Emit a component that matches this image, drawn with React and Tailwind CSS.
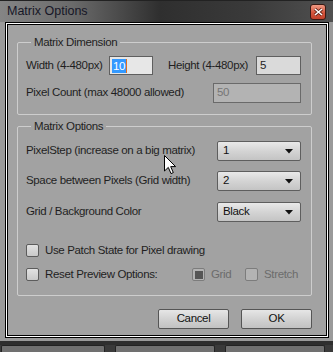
import React from 'react'

const font = { fontFamily: '"Liberation Sans", Arial, sans-serif' }

function Select({ value }) {
  return (
    <div className="flex h-[20px] w-[84px] items-center justify-between rounded-[2px] border border-[#5e5e5e] bg-[linear-gradient(to_bottom,#e9e9e9,#d4d4d4_50%,#c4c4c4)] pl-[5px] pr-[7px] text-[#111]">
      <span>{value}</span>
      <svg width="8" height="5" viewBox="0 0 8 5"><path d="M0 0H8L4 4.5Z" fill="#111" /></svg>
    </div>
  )
}

function Checkbox({ disabled, checked }) {
  return (
    <div
      className={`flex h-[13px] w-[13px] shrink-0 items-center justify-center rounded-[2px] border ${
        disabled ? 'border-[#7c7c7c] bg-[#b3b3b3]' : 'border-[#5c5c5c] bg-[linear-gradient(to_bottom,#e2e2e2,#c9c9c9)]'
      }`}
    >
      {checked && <div className="h-[8px] w-[8px] bg-[#555]" />}
    </div>
  )
}

function Button({ children }) {
  return (
    <button className="flex h-[20px] w-[71px] items-center justify-center rounded-[2px] border border-[#555] bg-[linear-gradient(to_bottom,#e6e6e6,#d2d2d2_50%,#c2c2c2)] text-[#111]">
      {children}
    </button>
  )
}

export default function App() {
  return (
    <div className="relative flex h-[352px] w-[333px] flex-col overflow-hidden bg-[#2e2e2e] text-[11.5px] tracking-[-0.35px] text-[#1f1f1f]" style={font}>
      {/* title bar */}
      <div className="flex h-[22px] shrink-0 items-center justify-between border-t border-[#222] bg-[linear-gradient(to_right,#858585,#6a6a6a_22%,#2f2f2f_48%,#3a3a3a_75%,#505050)] pl-[7px] pr-[7px] tracking-normal">
        <span className="text-[12.5px] text-[#161626]">Matrix Options</span>
        <div className="flex h-[16px] w-[16px] items-center justify-center rounded-[3px] border border-[#3a1a14] bg-[linear-gradient(to_bottom,#f09a84,#d5553c_55%,#c0412b)]">
          <svg width="9" height="8" viewBox="0 0 9 8">
            <path d="M1 1L8 7M8 1L1 7" stroke="#5a1f14" strokeWidth="3" />
            <path d="M1 1L8 7M8 1L1 7" stroke="#fff" strokeWidth="1.6" />
          </svg>
        </div>
      </div>

      {/* window frame */}
      <div className="bg-[#9a9a9a] pb-[3px] pl-[5px] pr-[4px]">
        <div className="border border-black">
          <div className="border border-white">
            <div className="border border-black bg-[#a2a2a2] pb-[6px] pl-[9px] pr-[14px] pt-[9px]">
              <fieldset className="rounded-[2px] border border-[#cdcdcd] pb-[11px] pl-[8px] pr-[10px]">
                <legend className="ml-[5px] px-[3px] leading-[16px]">Matrix Dimension</legend>
                <div className="mt-[6px] flex h-[19px] items-center">
                  <span className="w-[83px]">Width (4-480px)</span>
                  <div className="flex h-[19px] w-[44px] items-center border border-[#5f5f5f] bg-[#e7e7e7] pl-[2px]">
                    <span className="bg-[#3399ff] px-px leading-[14px] text-white">10</span>
                    <span className="h-[14px] w-px bg-[#e07020]" />
                  </div>
                  <span className="ml-[15px] flex-1">Height (4-480px)</span>
                  <div className="flex h-[19px] w-[45px] items-center border border-[#5f5f5f] bg-[#dadada] pl-[3px]">5</div>
                </div>
                <div className="mt-[8px] flex h-[20px] items-center justify-between">
                  <span>Pixel Count (max 48000 allowed)</span>
                  <div className="flex h-[20px] w-[88px] items-center border border-[#6a6a6a] bg-[#b3b3b3] pl-[3px] text-[#767676]">50</div>
                </div>
              </fieldset>

              <fieldset className="mt-[3px] rounded-[2px] border border-[#cdcdcd] pb-[11px] pl-[8px] pr-[10px]">
                <legend className="ml-[5px] px-[3px] leading-[16px]">Matrix Options</legend>
                <div className="mt-[7px] flex items-center justify-between">
                  <span>PixelStep (increase on a big matrix)</span>
                  <Select value="1" />
                </div>
                <div className="mt-[10px] flex items-center justify-between">
                  <span>Space between Pixels (Grid width)</span>
                  <Select value="2" />
                </div>
                <div className="mt-[11px] flex items-center justify-between">
                  <span>Grid / Background Color</span>
                  <Select value="Black" />
                </div>
                <div className="mt-[20px] flex items-center gap-[6px]">
                  <Checkbox />
                  <span>Use Patch State for Pixel drawing</span>
                </div>
                <div className="mt-[7px] flex items-center">
                  <Checkbox />
                  <span className="ml-[6px] w-[147px]">Reset Preview Options:</span>
                  <Checkbox disabled checked />
                  <span className="ml-[6px] w-[34px] text-[#6c6c6c]">Grid</span>
                  <Checkbox disabled />
                  <span className="ml-[6px] text-[#6c6c6c]">Stretch</span>
                </div>
              </fieldset>

              <div className="mt-[13px] flex justify-end gap-[12px]">
                <Button>Cancel</Button>
                <Button>OK</Button>
              </div>
            </div>
          </div>
        </div>
      </div>

      {/* background app strip */}
      <div className="mt-[4px] flex flex-1 gap-[10px] bg-[#3a3a3a] px-px">
        <div className="w-[104px] rounded-t-[2px] border border-b-0 border-[#222] bg-[#707070]" />
        <div className="w-[100px] rounded-t-[2px] border border-b-0 border-[#222] bg-[#707070]" />
        <div className="w-[100px] rounded-t-[2px] border border-b-0 border-[#222] bg-[#707070]" />
      </div>

      {/* mouse pointer */}
      <svg className="absolute left-[164px] top-[155px]" width="13" height="20" viewBox="0 0 13 20">
        <path d="M0.5 0.5V16L4.3 12.4L7 18.6L9.3 17.6L6.7 11.6H11.6Z" fill="#fff" stroke="#000" strokeWidth="1" strokeLinejoin="round" />
      </svg>
    </div>
  )
}
